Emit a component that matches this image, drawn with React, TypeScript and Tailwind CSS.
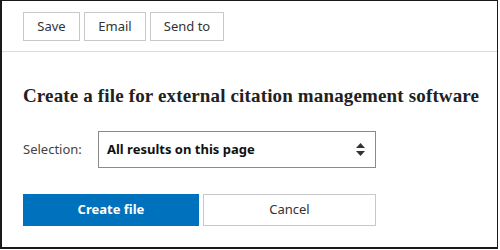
export default function App() {
  return (
    <div className="w-[500px] h-[250px] bg-white">
      <div className="w-[498px] h-[249px] border border-[#1a1a1a] border-l-2 border-b-2 flex flex-col font-['Noto_Sans',sans-serif] text-[#333]">
        {/* Toolbar */}
        <div className="flex gap-[4px] pl-[21px] pt-[11px] pb-[10px] border-b border-[#dcdcdc]">
          <button className="h-[29px] w-[57px] border border-[#c8c8c8] bg-white text-[13px] text-[#333]">Save</button>
          <button className="h-[29px] w-[62px] border border-[#c8c8c8] bg-white text-[13px] text-[#333]">Email</button>
          <button className="h-[29px] w-[74px] border border-[#c8c8c8] bg-white text-[13px] text-[#333]">Send to</button>
        </div>

        <div className="pl-[21px] pr-[10px]">
          <h2 className="mt-[32px] font-['Liberation_Serif',serif] font-bold text-[19px] tracking-[0.15px] leading-[24px] text-[#212121] whitespace-nowrap">
            Create a file for external citation management software
          </h2>

          <div className="mt-[23px] flex items-center">
            <span className="w-[75px] text-[13px] text-[#444]">Selection:</span>
            <div className="w-[278px] h-[37px] border border-[#8a8a8a] flex items-center justify-between pl-[8px] pr-[10px]">
              <span className="text-[13px] font-bold text-[#111]">All results on this page</span>
              <svg width="9" height="13" viewBox="0 0 9 13">
                <path d="M4.5 0 L9 5 L0 5 Z" fill="#333" />
                <path d="M4.5 13 L9 8 L0 8 Z" fill="#333" />
              </svg>
            </div>
          </div>

          <div className="mt-[26px] flex gap-[4px]">
            <button className="w-[176px] h-[32px] bg-[#0071bc] text-white text-[13px] font-bold">Create file</button>
            <button className="w-[173px] h-[32px] border border-[#c8c8c8] bg-white text-[13px] text-[#333]">Cancel</button>
          </div>
        </div>
      </div>
    </div>
  );
}
